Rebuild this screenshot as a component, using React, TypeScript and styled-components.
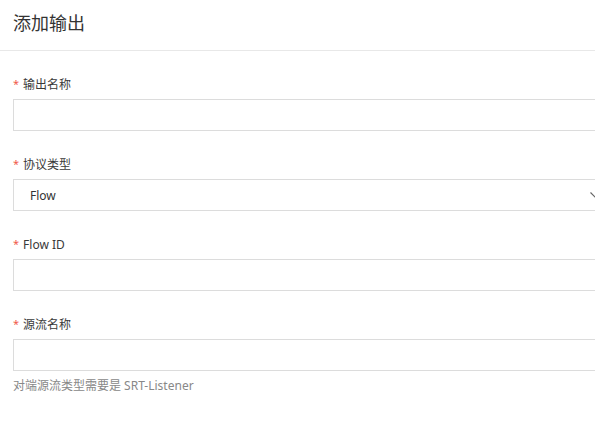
import React from "react";
import styled, { createGlobalStyle } from "styled-components";

const Global = createGlobalStyle`
  html, body { margin: 0; padding: 0; background: #fff; }
  body { font-family: "Noto Sans", "Noto Sans CJK SC", sans-serif; color: #333; overflow: hidden; }
`;

const Page = styled.div`
  width: 595px;
  height: 445px;
  overflow: hidden;
  background: #fff;
`;

const Header = styled.div`
  height: 50px;
  display: flex;
  align-items: center;
  padding: 0 13px;
  border-bottom: 1px solid #e8e8e8;
`;

const Title = styled.h2`
  margin: 0;
  font-size: 18px;
  font-weight: 400;
  color: #333;
  font-family: "Noto Sans CJK SC", sans-serif;
  line-height: 24px;
  margin-top: -6px;
`;

const Form = styled.div`
  width: 600px;
  padding: 22px 0 0 13px;
  display: flex;
  flex-direction: column;
  gap: 22px;
`;

const Field = styled.div`
  display: flex;
  flex-direction: column;
`;

const Label = styled.label`
  box-sizing: border-box;
  height: 22px;
  padding-top: 2px;
  line-height: 20px;
  font-size: 12px;
  color: #3a3a3a;
  margin-bottom: 4px;
  font-family: "Noto Sans", "Noto Sans CJK SC", sans-serif;
  display: flex;
  align-items: flex-start;
`;

const Star = styled.span`
  color: #f05a4a;
  margin-right: 4px;
  font-size: 11px;
  line-height: 18px;
`;

const Input = styled.div`
  box-sizing: border-box;
  height: 32px;
  border: 1px solid #dcdcdc;
  background: #fff;
  display: flex;
  align-items: center;
  justify-content: space-between;
  padding: 0 12px 0 16px;
  font-size: 12px;
  color: #333;
`;

const Help = styled.div`
  margin-top: 6px;
  font-size: 12px;
  line-height: 18px;
  color: #888;
  font-family: "Noto Sans", "Noto Sans CJK SC", sans-serif;
`;

const Chevron = () => (
  <svg width="10" height="10" viewBox="0 0 10 10" fill="none">
    <path d="M0.5 2.5 L5 7 L9.5 2.5" stroke="#666" strokeWidth="1.2" />
  </svg>
);

export default function App() {
  return (
    <Page>
      <Global />
      <Header>
        <Title>添加输出</Title>
      </Header>
      <Form>
        <Field>
          <Label><Star>*</Star>输出名称</Label>
          <Input />
        </Field>
        <Field>
          <Label><Star>*</Star>协议类型</Label>
          <Input>
            <span>Flow</span>
            <Chevron />
          </Input>
        </Field>
        <Field>
          <Label><Star>*</Star>Flow ID</Label>
          <Input />
        </Field>
        <Field>
          <Label><Star>*</Star>源流名称</Label>
          <Input />
          <Help>对端源流类型需要是 SRT-Listener</Help>
        </Field>
      </Form>
    </Page>
  );
}
